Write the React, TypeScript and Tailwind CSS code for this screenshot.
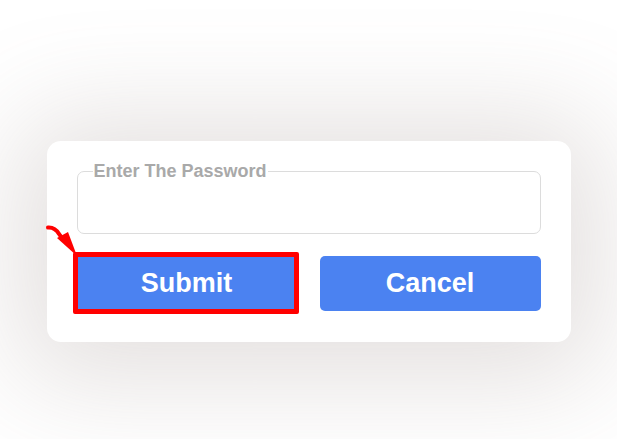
import React from "react";

export default function App() {
  return (
    <div
      className="w-[617px] h-[439px] bg-white overflow-hidden pt-[141px] flex justify-center"
      style={{ fontFamily: '"Liberation Sans", Arial, sans-serif' }}
    >
      <div className="relative w-[524px] h-[201px] bg-white rounded-[14px] px-[30px] pt-[20px] shadow-[0_8px_110px_30px_rgba(130,112,108,0.22)]">
        <fieldset className="border border-[#dcdcdc] rounded-[7px] pl-[15px] pr-[15px] m-0">
          <legend className="px-[1px] text-[18px] leading-[20px] font-bold text-[#a9a9a9]">
            Enter The Password
          </legend>
          <input type="password" className="block w-full h-[52px] outline-none bg-transparent" />
        </fieldset>
        <div className="mt-[22px] flex gap-[23px]">
          <div className="relative w-[220px]">
            <button className="w-full h-[55px] bg-[#4b82f1] text-white font-bold text-[27px] rounded-[4px]">
              Submit
            </button>
            <span className="pointer-events-none absolute -left-[4px] -top-[4px] -right-[2px] -bottom-[3px] border-[5px] border-[#ff0000] rounded-[2px]" />
          </div>
          <button className="flex-1 h-[55px] bg-[#4b82f1] text-white font-bold text-[27px] rounded-[5px]">
            Cancel
          </button>
        </div>
        <svg
          className="absolute left-[0px] top-[85px] overflow-visible"
          width="32"
          height="32"
          viewBox="0 0 32 32"
        >
          <path d="M1 1.5 Q8 1 12 8 L15 12" stroke="#ff0000" strokeWidth="4" fill="none" strokeLinecap="round" />
          <polygon points="10,12 21,6 30,30" fill="#ff0000" />
        </svg>
      </div>
    </div>
  );
}
